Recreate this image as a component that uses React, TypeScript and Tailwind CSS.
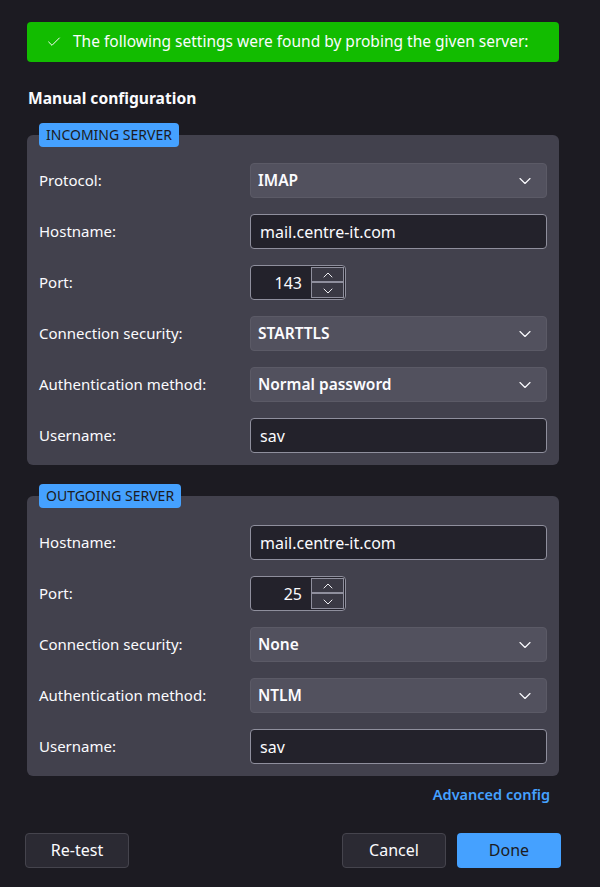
import { Check, ChevronDown, ChevronUp } from 'lucide-react';

type Row =
  | { kind: 'select'; label: string; value: string }
  | { kind: 'text'; label: string; value: string }
  | { kind: 'port'; label: string; value: string };

const incoming: Row[] = [
  { kind: 'select', label: 'Protocol:', value: 'IMAP' },
  { kind: 'text', label: 'Hostname:', value: 'mail.centre-it.com' },
  { kind: 'port', label: 'Port:', value: '143' },
  { kind: 'select', label: 'Connection security:', value: 'STARTTLS' },
  { kind: 'select', label: 'Authentication method:', value: 'Normal password' },
  { kind: 'text', label: 'Username:', value: 'sav' },
];

const outgoing: Row[] = [
  { kind: 'text', label: 'Hostname:', value: 'mail.centre-it.com' },
  { kind: 'port', label: 'Port:', value: '25' },
  { kind: 'select', label: 'Connection security:', value: 'None' },
  { kind: 'select', label: 'Authentication method:', value: 'NTLM' },
  { kind: 'text', label: 'Username:', value: 'sav' },
];

function Control({ row }: { row: Row }) {
  if (row.kind === 'select') {
    return (
      <div className="flex h-[35px] w-[297px] items-center justify-between rounded-[4px] border border-[#5b5a66] bg-[#52515e] pl-[7px] pr-[11px] text-[15.5px] font-semibold text-[#fbfbfe]">
        <span>{row.value}</span>
        <ChevronDown size={20} strokeWidth={1.4} />
      </div>
    );
  }
  if (row.kind === 'port') {
    return (
      <div className="flex h-[35px] w-[96px] items-center rounded-[4px] border border-[#8f8f9d] bg-[#23222b] p-[1px]">
        <span className="w-[50px] text-right text-[16px] text-[#fbfbfe]">{row.value}</span>
        <div className="ml-auto flex h-full w-[33px] flex-col overflow-hidden border border-[#8f8f9d] bg-[#3a3944]">
          <div className="flex h-[15px] items-center justify-center border-b-2 border-[#8f8f9d] text-[#fbfbfe]">
            <ChevronUp size={16} strokeWidth={1.4} className="shrink-0" />
          </div>
          <div className="flex flex-1 items-center justify-center text-[#fbfbfe]">
            <ChevronDown size={16} strokeWidth={1.4} className="shrink-0" />
          </div>
        </div>
      </div>
    );
  }
  return (
    <div className="flex h-[35px] w-[297px] items-center rounded-[4px] border border-[#8f8f9d] bg-[#23222b] px-[9px] text-[16px] text-[#fbfbfe]">
      {row.value}
    </div>
  );
}

function ServerPanel({ title, rows, top }: { title: string; rows: Row[]; top: string }) {
  return (
    <div className={`relative w-[532px] rounded-[6px] bg-[#42414d] pb-[12px] pl-[12px] ${top}`}>
      <div className="absolute -top-[12px] left-[12px] rounded-[4px] bg-[#45a1ff] px-[7px] py-[2px] text-[14px] leading-[20px] text-[#1c1b22]">
        {title}
      </div>
      <div className="flex flex-col gap-[16px]">
        {rows.map((row) => (
          <div key={row.label + row.value} className="flex items-center">
            <span className="w-[211px] text-[15px] text-[#fbfbfe]">{row.label}</span>
            <Control row={row} />
          </div>
        ))}
      </div>
    </div>
  );
}

export default function App() {
  return (
    <div className="min-h-[887px] w-[600px] bg-[#1c1b22] pt-[22px] pl-[27px] font-['Noto_Sans',sans-serif] text-[#fbfbfe]">
      <div className="flex h-[40px] w-[532px] items-center gap-[11px] whitespace-nowrap rounded-[4px] bg-[#12bc00] pl-[19px] text-[15.5px]">
        <Check size={16} strokeWidth={1.5} />
        <span>The following settings were found by probing the given server:</span>
      </div>

      <h2 className="mt-[25px] ml-[1px] text-[15.6px] font-bold leading-[22px]">Manual configuration</h2>

      <ServerPanel title="INCOMING SERVER" rows={incoming} top="mt-[26px] pt-[28px]" />
      <ServerPanel title="OUTGOING SERVER" rows={outgoing} top="mt-[31px] pt-[29px]" />

      <div className="mt-[8px] flex w-[523px] justify-end">
        <a className="text-[14.5px] font-semibold text-[#45a1ff]">Advanced config</a>
      </div>

      <div className="-ml-[2px] mt-[27px] flex w-[536px] items-center">
        <button className="h-[35px] w-[104px] rounded-[4px] border border-[#45444d] bg-[#2b2a33] text-[16px] text-[#fbfbfe]">
          Re-test
        </button>
        <button className="ml-auto h-[35px] w-[104px] rounded-[4px] border border-[#45444d] bg-[#2b2a33] text-[16px] text-[#fbfbfe]">
          Cancel
        </button>
        <button className="ml-[11px] h-[35px] w-[104px] rounded-[4px] bg-[#45a1ff] text-[16px] text-[#1c1b22]">
          Done
        </button>
      </div>
    </div>
  );
}
